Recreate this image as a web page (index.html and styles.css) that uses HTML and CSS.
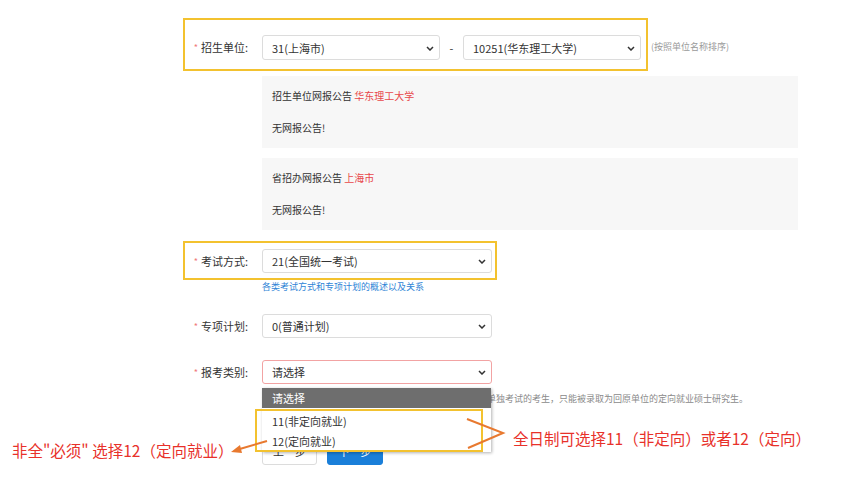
FILE: index.html
```html
<!DOCTYPE html>
<html lang="zh-CN">
<head>
<meta charset="utf-8">
<title>报名信息</title>
<link rel="stylesheet" href="styles.css">
</head>
<body>
<div class="page">
  <div class="form">
    <div class="line">
      <div class="field mark mark-unit">
        <div class="label"><span class="star">*</span>招生单位:</div>
        <div class="select w178"><span>31(上海市)</span><svg class="chev" width="8" height="5" viewBox="0 0 8 5"><path d="M1 1 L4 4 L7 1" fill="none" stroke="#333" stroke-width="1.5"/></svg></div>
        <span class="dash">-</span>
        <div class="select w178"><span>10251(华东理工大学)</span><svg class="chev" width="8" height="5" viewBox="0 0 8 5"><path d="M1 1 L4 4 L7 1" fill="none" stroke="#333" stroke-width="1.5"/></svg></div>
      </div>
      <span class="hint">(按照单位名称排序)</span>
    </div>

    <div class="notice first">
      <p>招生单位网报公告 <span class="red">华东理工大学</span></p>
      <p class="body">无网报公告!</p>
    </div>
    <div class="notice">
      <p>省招办网报公告 <span class="red">上海市</span></p>
      <p class="body">无网报公告!</p>
    </div>

    <div class="field mark mark-exam">
      <div class="label"><span class="star">*</span>考试方式:</div>
      <div class="select w230"><span>21(全国统一考试)</span><svg class="chev" width="8" height="5" viewBox="0 0 8 5"><path d="M1 1 L4 4 L7 1" fill="none" stroke="#333" stroke-width="1.5"/></svg></div>
    </div>
    <a class="link">各类考试方式和专项计划的概述以及关系</a>

    <div class="field plain plan">
      <div class="label"><span class="star">*</span>专项计划:</div>
      <div class="select w230"><span>0(普通计划)</span><svg class="chev" width="8" height="5" viewBox="0 0 8 5"><path d="M1 1 L4 4 L7 1" fill="none" stroke="#333" stroke-width="1.5"/></svg></div>
    </div>

    <div class="field plain kind">
      <div class="label"><span class="star">*</span>报考类别:</div>
      <div class="select w230 error"><span>请选择</span><svg class="chev" width="8" height="5" viewBox="0 0 8 5"><path d="M1 1 L4 4 L7 1" fill="none" stroke="#333" stroke-width="1.5"/></svg></div>
    </div>
    <p class="help">说明：报考定向就业的考生须与定向单位签订协议，报考单独考试的考生，只能被录取为回原单位的定向就业硕士研究生。</p>

    <div class="buttons">
      <button class="btn">上一步</button>
      <button class="btn primary">下一步</button>
    </div>
  </div>

  <ul class="dropdown">
    <li class="active">请选择</li>
    <li class="opt">11(非定向就业)</li>
    <li class="opt">12(定向就业)</li>
  </ul>

  <div class="anno-box"></div>
  <svg class="anno-lines" width="865" height="477" viewBox="0 0 865 477">
    <line x1="267" y1="441" x2="238" y2="449.5" stroke="#e8792f" stroke-width="2"/>
    <path d="M231 452 L240 445 L242 453 Z" fill="#e8792f"/>
    <polyline points="467,419 503,433 468,448" fill="none" stroke="#e8792f" stroke-width="2"/>
  </svg>
  <div class="anno-text left">非全"必须" 选择12（定向就业）</div>
  <div class="anno-text right">全日制可选择11（非定向）或者12（定向）</div>
</div>
</body>
</html>
```

FILE: styles.css
```css
* { box-sizing: border-box; }
html, body { margin: 0; padding: 0; background: #fff; }
body {
  font-family: "Noto Sans CJK SC", "Noto Sans", sans-serif;
  color: #333;
  font-size: 11px;
}
.page {
  position: relative;
  width: 865px;
  height: 477px;
  overflow: hidden;
}
.form {
  margin-left: 185px;
  padding-top: 18px;
}
.line {
  display: flex;
  align-items: center;
}
.field {
  display: flex;
  align-items: center;
}
.mark {
  border: 2px solid #f3c22f;
  margin-left: -2px;
  width: fit-content;
}
.mark-unit {
  height: 53px;
  padding: 13px 5px 7px 0;
}
.mark-exam {
  margin-top: 11px;
  height: 39px;
  padding: 4px 3px 3px 0;
}
.label {
  width: 77px;
  padding-right: 14px;
  text-align: right;
  font-size: 11px;
  line-height: 16px;
  color: #333;
  white-space: nowrap;
}
.star {
  color: #f07a7a;
  font-size: 9px;
  margin-right: 3px;
  vertical-align: 1px;
}
.select {
  position: relative;
  display: flex;
  align-items: center;
  height: 24px;
  border: 1px solid #dcdcdc;
  border-radius: 3px;
  background: #fff;
  padding: 0 9px;
  font-size: 11px;
  color: #333;
  white-space: nowrap;
}
.mark-unit .select { height: 25px; }
.select.error { border-color: #f2a3a3; }
.w178 { width: 178px; }
.w230 { width: 230px; }
.chev {
  position: absolute;
  right: 5px;
  top: 50%;
  margin-top: -2px;
}
.dash {
  width: 23px;
  text-align: center;
  font-size: 11px;
  color: #333;
}
.hint {
  margin-left: 3px;
  font-size: 9px;
  color: #9a9a9a;
  padding-top: 3px;
}
.notice {
  margin-left: 77px;
  width: 536px;
  background: #f7f7f7;
  padding: 10px 10px;
  margin-top: 10px;
}
.notice.first { margin-top: 5px; }
.notice p {
  margin: 0;
  font-size: 10px;
  line-height: 20px;
  color: #333;
}
.notice p.body { margin-top: 12px; }
.red { color: #e8474a; }
.link {
  display: block;
  margin-left: 77px;
  margin-top: 1px;
  font-size: 9px;
  line-height: 12px;
  color: #2f84d6;
}
.plan { margin-top: 21px; }
.kind { margin-top: 22px; }
.help {
  margin: 9px 0 0 77px;
  font-size: 9px;
  line-height: 12px;
  color: #8a8a8a;
  white-space: nowrap;
}
.buttons {
  display: flex;
  gap: 10px;
  margin-left: 77px;
  margin-top: 32px;
}
.btn {
  height: 28px;
  width: 55px;
  border: 1px solid #dcdcdc;
  border-radius: 3px;
  background: #fff;
  color: #333;
  font-family: inherit;
  font-size: 11px;
  padding: 0;
}
.btn.primary {
  width: 56px;
  background: #1a7fd9;
  border-color: #1a7fd9;
  color: #fff;
}
.dropdown {
  position: absolute;
  left: 262px;
  top: 388px;
  width: 229px;
  height: 64px;
  margin: 0;
  padding: 0;
  list-style: none;
  background: #fff;
  box-shadow: 1px 1px 3px rgba(0, 0, 0, 0.3);
}
.dropdown li {
  height: 20px;
  line-height: 20px;
  padding-left: 10px;
  font-size: 11px;
  color: #333;
}
.dropdown li.active {
  background: #6e6e6e;
  color: #fff;
}
.dropdown li.opt:nth-child(2) { margin-top: 3px; }
.anno-box {
  position: absolute;
  left: 255px;
  top: 409px;
  width: 228px;
  height: 43px;
  border: 2px solid #f3c22f;
}
.anno-lines {
  position: absolute;
  left: 0;
  top: 0;
  pointer-events: none;
}
.anno-text {
  position: absolute;
  font-size: 15.5px;
  line-height: 20px;
  color: #e8312a;
  white-space: nowrap;
}
.anno-text.left { left: 12px; top: 440px; }
.anno-text.right { left: 513px; top: 428px; }
```
